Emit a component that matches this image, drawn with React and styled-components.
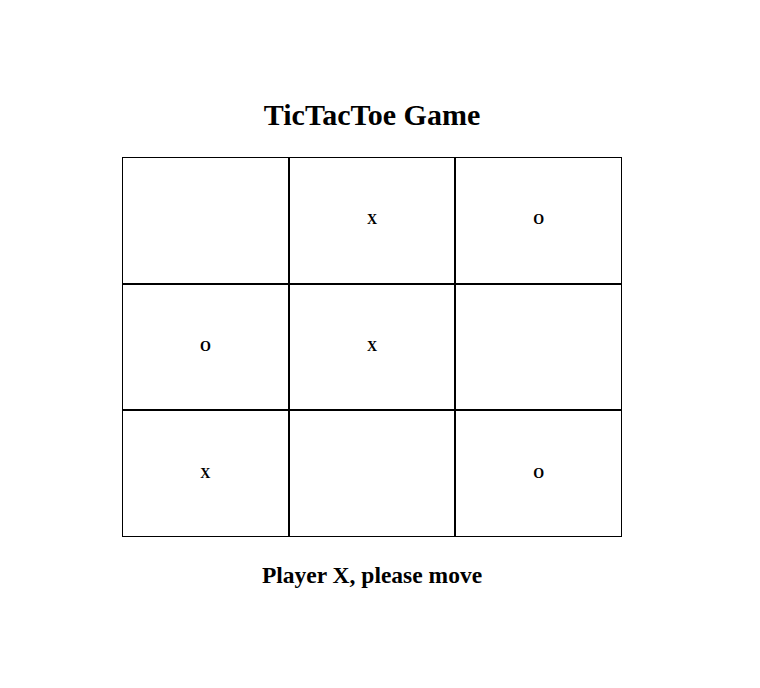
import styled, { createGlobalStyle } from "styled-components";

const GlobalStyle = createGlobalStyle`
  body {
    margin: 0;
    background: #fff;
    font-family: "Liberation Serif", "Times New Roman", serif;
    color: #000;
  }
`;

const Page = styled.div`
  width: 744px;
  padding-top: 98px;
  display: flex;
  flex-direction: column;
  align-items: center;
`;

const Title = styled.h1`
  margin: 0 0 25px;
  font-size: 30px;
  line-height: 34px;
  font-weight: bold;
`;

const Board = styled.div`
  width: 500px;
  height: 380px;
  display: grid;
  grid-template-columns: repeat(3, 1fr);
  grid-template-rows: repeat(3, 1fr);
`;

const Cell = styled.div`
  box-sizing: border-box;
  border: 1px solid #000;
  display: flex;
  align-items: center;
  justify-content: center;
  font-size: 14px;
  font-weight: bold;
  cursor: ${(props) => (props.$filled ? "default" : "pointer")};
`;

const Status = styled.h2`
  margin: 24px 0 0;
  font-size: 23.5px;
  line-height: 28px;
  font-weight: bold;
`;

const squares = ["", "X", "O", "O", "X", "", "X", "", "O"];

export default function App() {
  return (
    <>
      <GlobalStyle />
      <Page>
        <Title>TicTacToe Game</Title>
        <Board>
          {squares.map((value, i) => (
            <Cell key={i} $filled={!!value}>
              {value}
            </Cell>
          ))}
        </Board>
        <Status>Player X, please move</Status>
      </Page>
    </>
  );
}
